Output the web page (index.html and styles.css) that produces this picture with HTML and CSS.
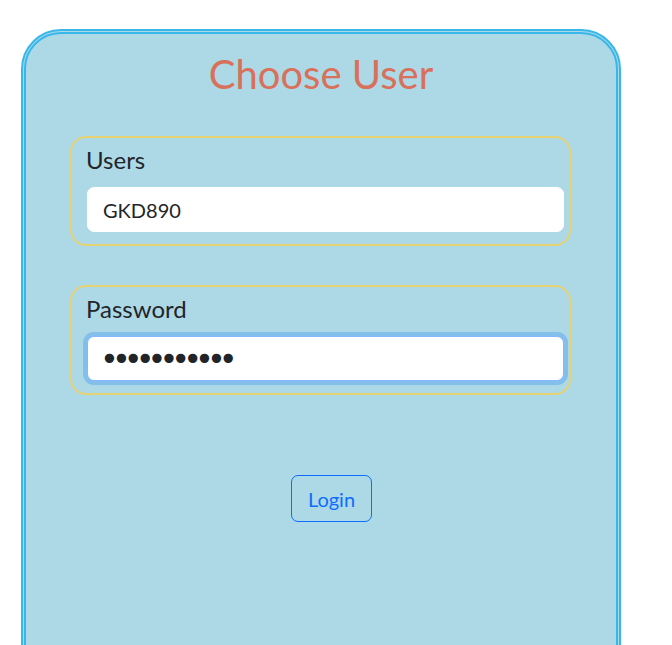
FILE: index.html
```html
<!DOCTYPE html>
<html>
<head>
<meta charset="utf-8">
<link rel="stylesheet" href="styles.css">
</head>
<body>
<div class="panel">
  <h1 class="title">Choose User</h1>
  <div class="group">
    <label class="label" for="user">Users</label>
    <input class="field" id="user" type="text" value="GKD890">
  </div>
  <div class="group">
    <label class="label" for="pass">Password</label>
    <input class="field focused secret" id="pass" type="password" value="abcdefghijk">
  </div>
  <div class="actions">
    <button class="btn" type="button">Login</button>
  </div>
</div>
</body>
</html>
```
FILE: styles.css
```css
html, body {
  margin: 0;
  padding: 0;
  background: #ffffff;
  font-family: "Lato", "Noto Sans", sans-serif;
  color: #212529;
}
.panel {
  box-sizing: border-box;
  width: 600px;
  height: 700px;
  margin: 29px 0 0 21px;
  background: #add8e6;
  border: 5px double #38b8ea;
  border-radius: 40px;
  padding: 16px 0 0;
  display: flex;
  flex-direction: column;
}
.title {
  margin: 0;
  text-align: center;
  font-weight: 400;
  font-size: 40px;
  line-height: 48px;
  color: #d9705a;
}
.group {
  box-sizing: border-box;
  width: 501px;
  margin: 38px auto 0 44px;
  border: 2px solid #e6d273;
  border-radius: 16px;
  padding: 4px 6px 12px 14px;
  display: flex;
  flex-direction: column;
}
.group + .group {
  margin-top: 39px;
}
.label {
  font-size: 24px;
  line-height: 36px;
  margin-bottom: 9px;
}
.field {
  box-sizing: border-box;
  height: 45px;
  width: 100%;
  margin-left: 1px;
  border: 1px solid #ffffff;
  border-radius: 7px;
  background: #ffffff;
  padding: 0 15px;
  font-family: "Lato", "Noto Sans", sans-serif;
  font-size: 20px;
  color: #212529;
  outline: none;
}
.focused {
  border-color: #86b7fe;
  box-shadow: 0 0 0 4px rgba(13, 110, 253, 0.25);
}
.secret {
  font-family: "DejaVu Sans", sans-serif;
  font-size: 32px;
  letter-spacing: -7px;
  padding-left: 12px;
}
.actions {
  display: flex;
  justify-content: center;
  margin-top: 80px;
  padding-left: 21px;
}
.btn {
  box-sizing: border-box;
  height: 47px;
  padding: 0 16px;
  background: transparent;
  border: 1px solid #0d6efd;
  border-radius: 7px;
  color: #0d6efd;
  font-family: "Lato", "Noto Sans", sans-serif;
  font-size: 20px;
}
```
